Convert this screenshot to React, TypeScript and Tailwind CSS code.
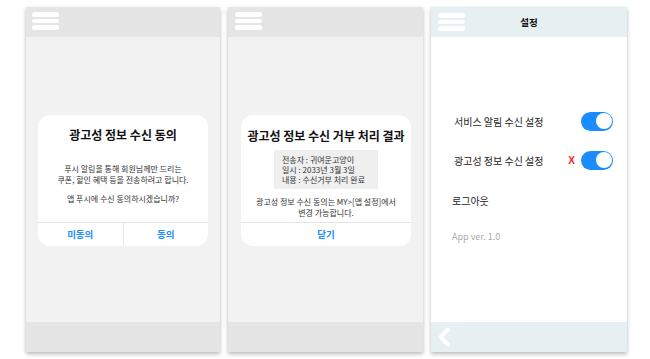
import React from "react";

const font = { fontFamily: '"Noto Sans CJK KR", "Noto Sans", sans-serif' };

function Burger() {
  return (
    <div className="flex flex-col gap-[2px] w-[27px]">
      <div className="h-[4.5px] rounded-full bg-white" />
      <div className="h-[4.5px] rounded-full bg-white" />
      <div className="h-[4.5px] rounded-full bg-white" />
    </div>
  );
}

function Toggle() {
  return (
    <div className="w-[32px] h-[19px] rounded-full bg-[#1a8cff] flex items-center justify-end pr-[1.5px]">
      <div className="w-[16px] h-[16px] rounded-full bg-white" />
    </div>
  );
}

export default function App() {
  return (
    <div className="w-[650px] h-[359px] bg-white overflow-hidden" style={font}>
      <div className="flex pl-[26px] pt-[7px] gap-[8px]">
        {/* Panel 1 */}
        <div className="w-[194px] h-[345px] flex flex-col shadow-[0_2px_4px_rgba(0,0,0,0.28)]">
          <div className="h-[30px] bg-[#e5e5e5] pl-[6px] pt-[5px]">
            <Burger />
          </div>
          <div className="flex-1 bg-[#f2f2f2] pt-[78px] px-[12px]">
            <div className="bg-white rounded-[12px] h-[131px] flex flex-col">
              <div className="pt-[12px] text-center text-[12px] leading-[16px] font-bold text-[#111]">
                광고성 정보 수신 동의
              </div>
              <div className="pt-[20px] text-center text-[8px] leading-[11px] text-[#333]">
                <div>푸시 알림을 통해 회원님께만 드리는</div>
                <div>쿠폰, 할인 혜택 등을 전송하려고 합니다.</div>
                <div className="mt-[8px]">앱 푸시에 수신 동의하시겠습니까?</div>
              </div>
              <div className="mt-auto h-[24px] border-t border-[#e5e5e5] flex">
                <div className="flex-1 flex items-center justify-center text-[9.5px] font-bold text-[#1a8cff] border-r border-[#e5e5e5]">
                  미동의
                </div>
                <div className="flex-1 flex items-center justify-center text-[9.5px] font-bold text-[#1a8cff]">
                  동의
                </div>
              </div>
            </div>
          </div>
          <div className="h-[30px] bg-[#e5e5e5]" />
        </div>

        {/* Panel 2 */}
        <div className="w-[195px] h-[345px] flex flex-col shadow-[0_2px_4px_rgba(0,0,0,0.28)]">
          <div className="h-[30px] bg-[#e5e5e5] pl-[7px] pt-[5px]">
            <Burger />
          </div>
          <div className="flex-1 bg-[#f2f2f2] pt-[78px] pl-[13px] pr-[12px]">
            <div className="bg-white rounded-[12px] h-[131px] flex flex-col">
              <div className="pt-[13px] text-center text-[12px] leading-[16px] font-bold text-[#111]">
                광고성 정보 수신 거부 처리 결과
              </div>
              <div className="mt-[6px] mx-auto w-[104px] h-[39px] bg-[#efefef] pl-[8px] pt-[5px] text-[8px] leading-[10px] text-[#333]">
                <div>전송자 : 귀여운고양이</div>
                <div>일시 : 2033년 3월 3일</div>
                <div>내용 : 수신거부 처리 완료</div>
              </div>
              <div className="pt-[7px] text-center text-[8px] leading-[11px] text-[#333]">
                <div>광고성 정보 수신 동의는 MY&gt;[앱 설정]에서</div>
                <div>변경 가능합니다.</div>
              </div>
              <div className="mt-auto h-[24px] border-t border-[#e5e5e5] flex items-center justify-center text-[9.5px] font-bold text-[#1a8cff]">
                닫기
              </div>
            </div>
          </div>
          <div className="h-[30px] bg-[#e5e5e5]" />
        </div>

        {/* Panel 3 */}
        <div className="w-[196px] h-[345px] flex flex-col shadow-[0_2px_4px_rgba(0,0,0,0.28)]">
          <div className="h-[30px] bg-[#e6eff2] grid grid-cols-[1fr_auto_1fr] items-center">
            <div className="pl-[7px]">
              <Burger />
            </div>
            <div className="text-[9.5px] font-bold text-[#111]">설정</div>
            <div />
          </div>
          <div className="flex-1 bg-white pt-[65px] flex flex-col">
            <div className="h-[38px] flex items-center pl-[23px] pr-[14px]">
              <div className="flex-1 text-[10px] text-[#222]">서비스 알림 수신 설정</div>
              <Toggle />
            </div>
            <div className="h-[40px] flex items-center pl-[23px] pr-[14px]">
              <div className="flex-1 text-[10px] text-[#222]">광고성 정보 수신 설정</div>
              <div className="text-[10px] font-bold text-[#ff1a1a] mr-[6px]" style={{ fontFamily: '"Liberation Sans", sans-serif' }}>X</div>
              <Toggle />
            </div>
            <div className="h-[40px] flex items-center pl-[21px] text-[10px] text-[#222]">
              로그아웃
            </div>
            <div className="h-[34px] flex items-center pl-[21px] text-[9px] text-[#aaaaaa]">
              App ver. 1.0
            </div>
          </div>
          <div className="h-[30px] bg-[#e6eff2] flex items-center pl-[6px]">
            <svg width="14" height="20" viewBox="0 0 14 20">
              <path d="M11 2.5 L3.5 10 L11 17.5" fill="none" stroke="white" strokeWidth="4" strokeLinecap="round" strokeLinejoin="round" />
            </svg>
          </div>
        </div>
      </div>
    </div>
  );
}
